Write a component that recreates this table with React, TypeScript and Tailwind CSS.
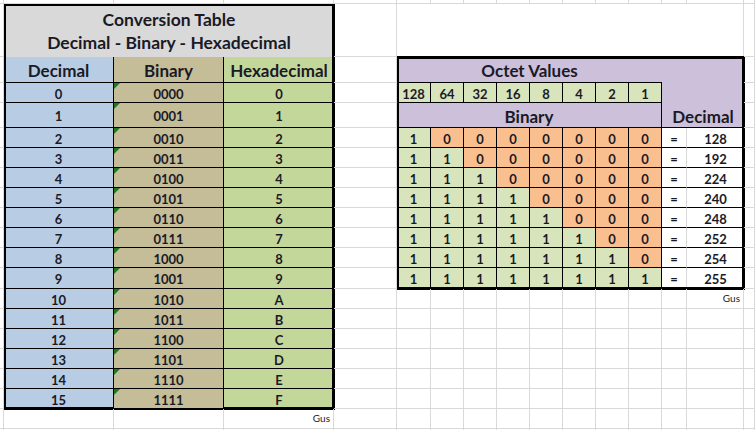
import React from "react";

const TXT = "text-[#1a1a26]";

function Tri() {
  return (
    <span className="absolute left-0 top-0 h-0 w-0 border-t-[6px] border-r-[6px] border-t-[#1f7a1f] border-r-transparent" />
  );
}

const hex = "0123456789ABCDEF";
const DATA = "flex items-center justify-center pt-[4px] text-[13px] font-bold";
const HEAD = "flex items-center justify-center pt-[3px] text-[17px] font-bold";

function LeftTable() {
  const rows = Array.from({ length: 16 }, (_, i) => i);
  return (
    <div className="col-[2/5] row-[2/20] grid grid-cols-[110px_110px_110px] grid-rows-[53px_26px_20px_25px_20px_20px_20px_20px_20px_20px_20px_21px_20px_20px_20px_20px_20px_20px] outline-[3px] outline-solid outline-black outline-offset-[-2px]">
      <div className="col-span-3 flex flex-col items-center justify-center bg-[#d9d9d9] text-[17.5px] font-bold leading-[23px]">
        <span>Conversion Table</span>
        <span>Decimal - Binary - Hexadecimal</span>
      </div>
      <div className={`${HEAD} border-r border-b border-black bg-[#b8cce4]`}>Decimal</div>
      <div className={`${HEAD} border-r border-b border-black bg-[#c4bd97]`}>Binary</div>
      <div className={`${HEAD} border-b border-black bg-[#c4d79b]`}>Hexadecimal</div>
      {rows.map((i) => (
        <React.Fragment key={i}>
          <div className={`${DATA} border-r border-b border-black bg-[#b8cce4]`}>{i}</div>
          <div className={`${DATA} relative border-r border-b border-black bg-[#c4bd97]`}>
            <Tri />
            {i.toString(2).padStart(4, "0")}
          </div>
          <div className={`${DATA} border-b border-black bg-[#c4d79b]`}>{hex[i]}</div>
        </React.Fragment>
      ))}
    </div>
  );
}

function RightTable() {
  const octets = [128, 64, 32, 16, 8, 4, 2, 1];
  const values = [128, 192, 224, 240, 248, 252, 254, 255];
  return (
    <div className="col-[6/16] row-[3/14] grid grid-cols-[34px_33px_33px_33px_33px_33px_33px_33px_25px_57px] grid-rows-[26px_20px_25px_20px_20px_20px_20px_20px_20px_20px_21px] bg-[#ccc0da] outline-[3px] outline-solid outline-black outline-offset-[-2px]">
      <div className={`${HEAD} col-span-8 border-b border-black`}>Octet Values</div>
      <div className="col-span-2 row-span-2" />
      {octets.map((o) => (
        <div key={o} className={`${DATA} border-r border-b border-black bg-[#d8e4bc]`}>
          {o}
        </div>
      ))}
      <div className={`${HEAD} col-span-8 border-r border-b border-black`}>Binary</div>
      <div className={`${HEAD} col-span-2 border-b border-black`}>Decimal</div>
      {values.map((v, i) => (
        <React.Fragment key={v}>
          {octets.map((_, j) => (
            <div
              key={j}
              className={
                j <= i
                  ? `${DATA} border-r border-b border-black bg-[#d8e4bc]`
                  : `${DATA} border-r border-b border-black bg-[#fabf8f]`
              }
            >
              {j <= i ? 1 : 0}
            </div>
          ))}
          <div className={`${DATA} border-r border-b border-r-[#d9d9d9] border-b-black bg-white`}>=</div>
          <div className={`${DATA} border-b border-black bg-white`}>{v}</div>
        </React.Fragment>
      ))}
    </div>
  );
}

export default function App() {
  const bg = Array.from({ length: 336 }, (_, i) => i);
  return (
    <div
      className={`h-[430px] w-[755px] overflow-hidden bg-white font-[Lato,'Noto_Sans',sans-serif] ${TXT}`}
    >
      <div className="grid grid-cols-[4px_110px_110px_110px_63px_34px_33px_33px_33px_33px_33px_33px_33px_25px_57px_11px] grid-rows-[4px_53px_26px_20px_25px_20px_20px_20px_20px_20px_20px_20px_21px_20px_20px_20px_20px_20px_20px_20px_20px] auto-rows-[20px]">
        <div className="col-[6/16] row-[2/3] border-r border-b border-[#d9d9d9]" />
        <LeftTable />
        <RightTable />
        <div className="col-[4/5] row-[20/21] flex items-center justify-end border-r border-b border-[#d9d9d9] pr-[3px] text-[10px]">
          Gus
        </div>
        <div className="col-[15/16] row-[14/15] flex items-center justify-end border-r border-b border-[#d9d9d9] pr-[3px] text-[10px]">
          Gus
        </div>
        {bg.map((i) => (
          <div key={i} className="border-r border-b border-[#d9d9d9]" />
        ))}
      </div>
    </div>
  );
}
